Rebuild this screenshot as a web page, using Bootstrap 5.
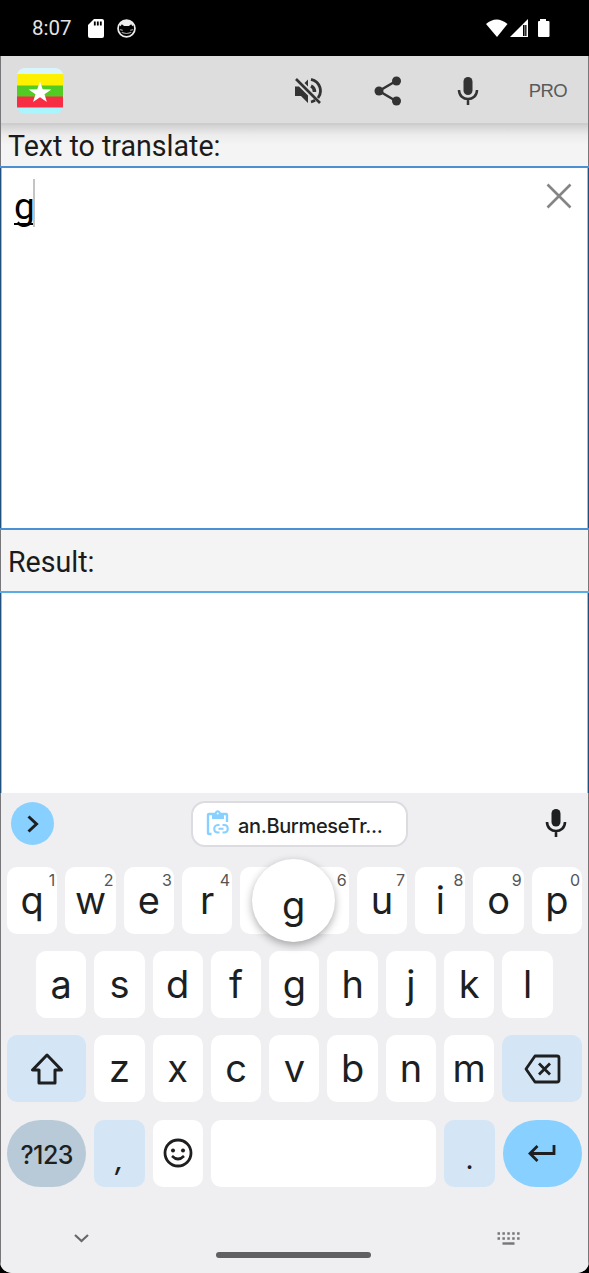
<!DOCTYPE html>
<html lang="en">
<head>
<meta charset="utf-8">
<meta name="viewport" content="width=device-width, initial-scale=1">
<title>Burmese Translator</title>
<link href="https://cdn.jsdelivr.net/npm/bootstrap@5.3.0/dist/css/bootstrap.min.css" rel="stylesheet">
<style>
body{background:#000;font-family:Roboto,sans-serif;color:#1b1b1b;overflow:hidden}
svg{display:block;flex:none}
.phone{height:1273px}
.status{height:56px;padding:0 39px 0 32px;font-size:20.5px;color:#e4e4e4}
.screen{height:1217px;background:#f4f4f4;border-radius:0 0 12px 12px;overflow:hidden}
.edge{border:solid #77777a;border-width:0 1px}
.appbar{height:69px;background:#ddd;padding:0 21px 0 16px;box-shadow:inset 0 -2px #cdcdcd}
.pro{font:18.5px/1 "Liberation Sans",sans-serif;color:#5a5a5a;margin:2px 0 0 50px;letter-spacing:-.6px}
.lbl{font-size:28.6px;line-height:43px;padding-left:7px}
.shade{height:41px;background:linear-gradient(#d2d2d2,#ececec 10px,#f4f4f4 20px)}
.box{background:#fff;border:solid #4a90d2;border-width:2px 0;box-shadow:inset 1px 0 #205080,inset -1px 0 #205080,inset 2px 0 #8fc0ea,inset -2px 0 #8fc0ea}
.source{height:364px;padding:10px 17px 0 14px}
.entry{font-size:37px;line-height:58px;color:#000}
.entry span{text-decoration:underline;text-decoration-thickness:2px;text-underline-offset:4px;text-decoration-skip-ink:none;letter-spacing:-1.5px}
.caret{width:2px;height:48px;background:#c4c4c4;margin-top:1px}
.result{height:202px;border-color:#5aace4;border-bottom:0}
.kb{height:480px;background:#efeff2;font-family:Inter,sans-serif;color:#1d1f21;padding:0 6px}
.strip{height:74px;padding:9px 15px 0 4px}
.more{width:43px;height:43px;background:#88d0ff}
.clip{width:217px;height:46px;border:2px solid #dcdce0;border-radius:14px;background:#fff;font:500 20px/1 Inter,sans-serif;letter-spacing:-.35px;margin:-1px 0 0 42px}
.keys{gap:8px;height:67px;margin-bottom:17.2px}
.key{flex:0 0 50.3px;background:#fff;border-radius:10px;font-size:38px;line-height:67px;text-align:center;position:relative}
.key sup{position:absolute;right:2px;top:5px;font-size:16px;line-height:16px;color:#555}
.inset-row{padding:0 29px}
.wide{flex:0 0 79.3px}
.tone{background:#d4e5f5}
.space{flex:1 1 0}
.mode{background:#b8cad8;border-radius:34px;font-size:25px;font-weight:500;letter-spacing:-.6px;line-height:71px}
.enter{background:#88d0ff;border-radius:34px}
.popup{position:absolute;left:12px;top:-8px;width:83px;height:83px;border-radius:50%;background:#fff;box-shadow:0 3px 9px rgba(0,0,0,.32);line-height:92px;z-index:3}
.low{line-height:79px;font-size:28px}
.comma{line-height:80px;font-weight:500}
.sys{height:69px;padding:28px 62px 0 67px}
.home{width:155px;height:6px;border-radius:3px;background:#606062;margin-top:20px}
</style>
</head>
<body>
<div class="phone d-flex flex-column">
  <header class="status d-flex align-items-center">
    <span>8:07</span>
    <svg style="margin-left:16px" width="16" height="19" viewBox="0 0 16 19"><path fill="#fff" d="M6 0h8q2 0 2 2v15q0 2-2 2H2q-2 0-2-2V6z"/><path stroke="#000" stroke-width="1.800" d="M6.800 2.500v4M9.800 2.500v4M12.800 2.500v4"/></svg>
    <svg style="margin-left:13px" width="19" height="19" viewBox="0 0 20 20"><circle cx="10" cy="10" r="8.900" fill="none" stroke="#eee" stroke-width="1.800"/><path fill="#eee" d="M2.500 6Q3 2 10 1.500T17.500 6L16 7.500l-1-2-2.500 1.800h-5L5 5.500l-1 2z"/><path fill="none" stroke="#999" stroke-width="1.200" d="M3 11l3 1M17 11l-3 1M5 14q5 2.500 10 0"/></svg>
    <svg class="ms-auto" width="64" height="19" viewBox="0 0 64 19"><path fill="#fff" d="M0 5Q10.500-4 21.500 5L11 18z"/><path fill="#fff" d="M42 0v18H24z"/><path fill="#000" d="M37 6h3.500v11H37z"/><path fill="#999" d="M38.300 6h1v11h-1z"/><path fill="#fff" d="M54 0h6v2h2.500q1 0 1 1V17q0 1-1 1H53q-1 0-1-1V3q0-1 1-1h1z"/></svg>
  </header>
  <div class="screen">
    <nav class="appbar edge d-flex align-items-center">
      <svg width="46" height="46" viewBox="0 0 46 46"><clipPath id="r"><rect width="46" height="46" rx="8"/></clipPath><g clip-path="url(#r)"><path fill="#d8f6fb" d="M0 0h46v7H0z"/><path fill="#fff000" d="M0 6h46v12H0z"/><path fill="#52cc23" d="M0 17.500h46V29H0z"/><path fill="#f72d43" d="M0 28.500h46V40H0z"/><path fill="#a9f4fd" d="M0 39.500h46V46H0z"/></g><path fill="#fff" d="M23 13.500l2.700 7.800 8.600.1-6.800 4.900 2.400 7.700-6.900-4.700-7 4.700 2.500-7.700-6.900-4.900 8.600-.1z"/></svg>
      <svg class="ms-auto" width="28" height="28" viewBox="0 0 28 28" fill="none" stroke="#333"><path fill="#333" stroke="none" d="M1 9.500h4l9 9V26l-7-7H1zM14 2.500v7l-3.500-3.500z"/><path stroke-width="2.800" d="M17 2.300c10 2.500 11.500 13 7 18.700M17 25q2-.5 4-1.700"/><path stroke-width="3.500" d="M17 9q3.500 1.500 3.500 6"/><path stroke-width="2.700" d="M2 2l24 24"/></svg>
      <svg style="margin-left:52px" width="28" height="30" viewBox="0 0 28 30"><path fill="none" stroke="#333" stroke-width="2.500" d="M22 5L5 15l17 10"/><g fill="#333"><circle cx="22.500" cy="5" r="4.500"/><circle cx="5" cy="15" r="4.500"/><circle cx="22.500" cy="25" r="4.500"/></g></svg>
      <svg style="margin-left:55px" width="22" height="28" viewBox="0 0 22 28"><rect x="6.500" y="0" width="9" height="18" rx="4.500" fill="#333"/><path fill="none" stroke="#333" stroke-width="2.500" d="M2 13c0 12 18 12 18 0M11 21.500V28"/></svg>
      <span class="pro">PRO</span>
    </nav>
    <div class="lbl edge shade">Text to translate:</div>
    <main class="box source d-flex align-items-start">
      <div class="entry d-flex"><span>g</span><i class="caret"></i></div>
      <svg class="ms-auto" style="margin-top:5px" width="26" height="26" viewBox="0 0 26 26"><path stroke="#858585" stroke-width="2.600" d="M1.500 1.500l23 23M24.500 1.500l-23 23"/></svg>
    </main>
    <div class="lbl edge" style="height:61px;padding-top:11px">Result:</div>
    <div class="box result"></div>
    <section class="kb edge">
      <div class="strip d-flex align-items-start">
        <div class="more rounded-circle d-flex align-items-center justify-content-center"><svg width="14" height="18" viewBox="0 0 14 18"><path fill="none" stroke="#1d1f21" stroke-width="3" d="M2.500 1.500L10.500 9l-8 7.500"/></svg></div>
        <div style="width:95px"></div>
        <div class="clip d-flex align-items-center">
          <svg style="margin:0 8px 3px 13px" width="24" height="26" viewBox="0 0 24 26" fill="none" stroke="#88d0ff" stroke-width="2.400"><path d="M5.500 24H3q-1 0-1-1V5q0-1 1-1h17q1 0 1 1v7"/><path fill="#88d0ff" stroke="none" d="M6 4h2.500c.5-5 6-5 6.500 0H18v5H6z"/><path stroke-width="2.100" d="M13.500 15h-1.500c-5 0-5 7.500 0 7.500h1.500M16.500 15h1.500c5 0 5 7.500 0 7.500h-1.500M12.500 18.700h5"/><circle cx="11.700" cy="3.500" r="1" fill="#fff" stroke="none"/></svg>
          <span class="pt-1">an.BurmeseTr...</span>
        </div>
        <svg class="ms-auto" style="margin-top:7px" width="22" height="28" viewBox="0 0 22 28"><rect x="6.500" y="0" width="9" height="17.500" rx="4.500" fill="#1d1f21"/><path fill="none" stroke="#1d1f21" stroke-width="2.600" d="M2 13c0 12 18 12 18 0M11 21.500V28"/></svg>
      </div>
      <div class="keys d-flex"><div class="key">q<sup>1</sup></div><div class="key">w<sup>2</sup></div><div class="key">e<sup>3</sup></div><div class="key">r<sup>4</sup></div><div class="key"><div class="popup">g</div></div><div class="key"><sup>6</sup></div><div class="key">u<sup>7</sup></div><div class="key">i<sup>8</sup></div><div class="key">o<sup>9</sup></div><div class="key">p<sup>0</sup></div></div>
      <div class="keys inset-row d-flex"><div class="key">a</div><div class="key">s</div><div class="key">d</div><div class="key">f</div><div class="key">g</div><div class="key">h</div><div class="key">j</div><div class="key">k</div><div class="key">l</div></div>
      <div class="keys d-flex">
        <div class="key wide tone d-flex align-items-center justify-content-center"><svg width="34" height="32" viewBox="0 0 34 32"><path fill="none" stroke="#1d1f21" stroke-width="3" stroke-linejoin="round" d="M17 2L2.500 17H9v13h16V17h6.500z"/></svg></div>
        <div class="key">z</div><div class="key">x</div><div class="key">c</div><div class="key">v</div><div class="key">b</div><div class="key">n</div><div class="key">m</div>
        <div class="key wide tone d-flex align-items-center justify-content-center"><svg width="37" height="30" viewBox="0 0 37 30"><path fill="none" stroke="#1d1f21" stroke-width="2.800" stroke-linejoin="round" d="M11 2h22q2 0 2 2v22q0 2-2 2H11L2 15zM15 9.500l11 11M26 9.500l-11 11"/></svg></div>
      </div>
      <div class="keys d-flex">
        <div class="key wide mode">?123</div><div class="key tone low comma"><i>,</i></div>
        <div class="key d-flex align-items-center justify-content-center"><svg width="30" height="30" viewBox="0 0 30 30"><circle cx="15" cy="15" r="13" fill="none" stroke="#1d1f21" stroke-width="2.800"/><circle cx="10" cy="12.500" r="2" fill="#1d1f21"/><circle cx="20" cy="12.500" r="2" fill="#1d1f21"/><path fill="none" stroke="#1d1f21" stroke-width="2.600" d="M9 18q6 6 12 0"/></svg></div>
        <div class="key space"></div><div class="key tone low">.</div>
        <div class="key wide enter d-flex align-items-center justify-content-center"><svg width="28" height="17" viewBox="0 0 28 17"><path fill="none" stroke="#1d1f21" stroke-width="2.800" d="M26 0v8.500H2M9.500 1L2 8.500 9.500 16"/></svg></div>
      </div>
      <div class="sys d-flex align-items-start">
        <svg style="margin-top:2px" width="15" height="9" viewBox="0 0 15 9"><path fill="none" stroke="#68686b" stroke-width="2.200" d="M1 1l6.500 6L14 1"/></svg>
        <div class="home mx-auto"></div>
        <svg width="23" height="13" viewBox="0 0 23 13"><path fill="none" stroke="#77777a" stroke-width="2.500" stroke-dasharray="2.500 2.400" d="M.5 1.500h22.500M.5 6.500h22.500"/><path stroke="#77777a" stroke-width="2.400" d="M5.500 11.500h12"/></svg>
      </div>
    </section>
  </div>
</div>
<script src="https://cdn.jsdelivr.net/npm/bootstrap@5.3.0/dist/js/bootstrap.bundle.min.js"></script>
</body>
</html>
